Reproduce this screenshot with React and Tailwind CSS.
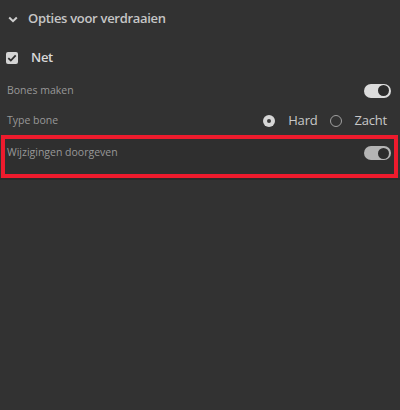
import React, { useState } from "react";

function Toggle({ on = true, dim = false }) {
  return (
    <div
      className={`w-[27px] h-[14px] rounded-full flex items-center px-[2px] ${
        dim ? "bg-[#b4b4b4]" : "bg-[#dcdcdc]"
      } ${on ? "justify-end" : "justify-start"}`}
    >
      <div className="w-[11px] h-[11px] rounded-full bg-[#2c2c2c]" />
    </div>
  );
}

function Radio({ checked }) {
  return checked ? (
    <div className="w-[12px] h-[12px] rounded-full bg-[#d6d6d6] flex items-center justify-center">
      <div className="w-[4px] h-[4px] rounded-full bg-[#3a3a3a]" />
    </div>
  ) : (
    <div className="w-[12px] h-[12px] rounded-full border-[1.5px] border-[#a0a0a0]" />
  );
}

export default function App() {
  const [net, setNet] = useState(true);
  const [hard, setHard] = useState(true);

  return (
    <div
      className="w-[400px] h-[410px] bg-[#323232] text-[#c8c8c8] overflow-hidden"
      style={{ fontFamily: '"Open Sans", "Noto Sans", sans-serif' }}
    >
      {/* kop */}
      <div className="h-[38px] flex items-center pl-[7px]">
        <svg width="10" height="7" viewBox="0 0 10 7" className="ml-[1px]">
          <path d="M1.2 1.5 L5 5.2 L8.8 1.5" fill="none" stroke="#cfcfcf" strokeWidth="2" />
        </svg>
        <span className="ml-[10px] text-[13px] font-semibold tracking-[-0.3px] text-[#c6c6c6]">
          Opties voor verdraaien
        </span>
      </div>

      {/* Net */}
      <div className="h-[39px] flex items-center pl-[6px]" onClick={() => setNet(!net)}>
        <div className="w-[12px] h-[12px] rounded-[2px] bg-[#d4d4d4] flex items-center justify-center">
          {net && (
            <svg width="10" height="8" viewBox="0 0 10 8">
              <path d="M1.3 4.2 L3.8 6.5 L8.7 1.4" fill="none" stroke="#2e2e2e" strokeWidth="1.8" />
            </svg>
          )}
        </div>
        <span className="ml-[13px] text-[13px] font-semibold tracking-[-0.3px] text-[#d8d8d8]">Net</span>
      </div>

      {/* Bones maken */}
      <div className="h-[27px] flex items-center justify-between pl-[7px] pr-[9px]">
        <span className="text-[10.5px] text-[#989898]">Bones maken</span>
        <Toggle />
      </div>

      {/* Type bone */}
      <div className="h-[31px] pt-[3px] flex items-center justify-between pl-[7px] pr-[13px]">
        <span className="text-[10.5px] text-[#989898]">Type bone</span>
        <div className="flex items-center text-[13px] font-medium tracking-[-0.2px] text-[#c8c8c8]">
          <button className="flex items-center" onClick={() => setHard(true)}>
            <Radio checked={hard} />
            <span className="ml-[13px]">Hard</span>
          </button>
          <button className="flex items-center ml-[12px]" onClick={() => setHard(false)}>
            <Radio checked={!hard} />
            <span className="ml-[13px]">Zacht</span>
          </button>
        </div>
      </div>

      {/* Wijzigingen doorgeven, gemarkeerd */}
      <div className="ml-[1px] mr-[2px] h-[43px] border-[4px] border-[#ee1b2d] bg-[#2f2f2f]">
        <div className="h-[28px] flex items-center justify-between pl-[2px] pr-[3px]">
          <span className="text-[10.5px] text-[#989898]">Wijzigingen doorgeven</span>
          <Toggle dim />
        </div>
      </div>
      <div className="h-[2px] bg-[#2a2a2a]" />
    </div>
  );
}
